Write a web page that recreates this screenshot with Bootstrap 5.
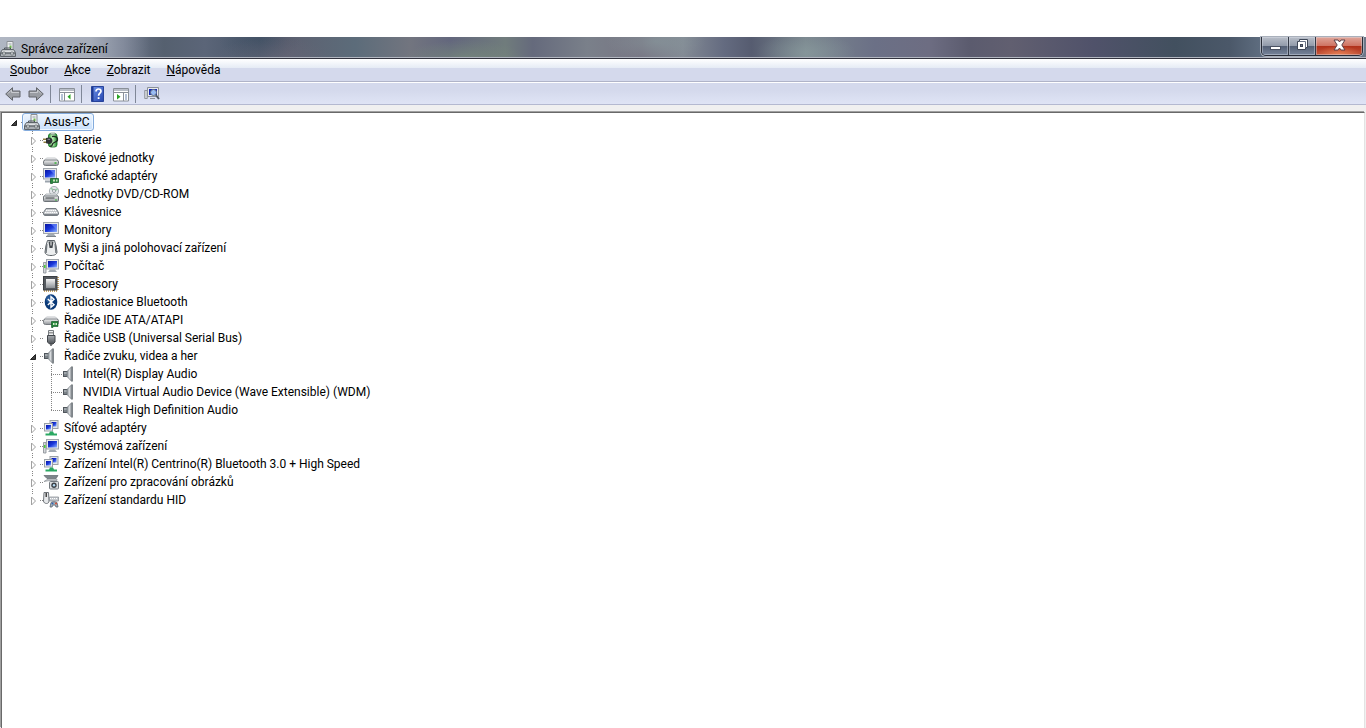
<!DOCTYPE html>
<html lang="cs">
<head>
<meta charset="utf-8">
<meta name="viewport" content="width=device-width, initial-scale=1">
<title>Správce zařízení</title>
<link href="https://cdn.jsdelivr.net/npm/bootstrap@5.3.0/dist/css/bootstrap.min.css" rel="stylesheet">
<style>
  body { font: 12px/18px Roboto, "Open Sans", sans-serif; color: #000; background: #fff; padding-top: 37px; }
  button { font: inherit; color: inherit; background: none; border: 0; padding: 0; }
  svg { display: block; flex: none; }
  .icon16 { width: 16px; height: 16px; }

  .titlebar {
    height: 22px; border-bottom: 1px solid #33343f; box-shadow: inset 0 -1px #b3b7c1;
    background:
      linear-gradient(90deg, rgba(214,219,227,.65), rgba(205,210,218,.6) 90px, rgba(190,196,206,.3) 122px, transparent 150px),
      radial-gradient(60px 20px at 20% 100%, rgba(104,104,120,.5), transparent),
      radial-gradient(60px 18px at 34% 100%, rgba(122,144,122,.6), transparent),
      radial-gradient(50px 20px at 59% 75%, rgba(145,165,165,.5), transparent),
      radial-gradient(50px 20px at 48% 20%, rgba(140,160,162,.5), transparent),
      radial-gradient(40px 20px at 19% 20%, rgba(62,78,98,.5), transparent),
      linear-gradient(90deg, #687286 0, #6b7488 9%, #55606f 12%, #5b6578 15%, #485669 19%, #5d6070 21%, #5c6c7a 26%, #72757f 30%, #63677d 33%, #707c7c 37%, #656a7c 39%, #7a808a 43%, #777583 47%, #838a94 50%, #646b80 53%, #565c70 55%, #7a868e 59%, #6b7086 64%, #6d6d82 68%, #5b5b6e 71%, #615f70 74%, #50526a 80%, #42505f 86%, #4b5869 90%, #647386 93%, #6d7889 100%);
  }
  .caption { gap: 5px; }
  .caption h1 { font-size: 12px; line-height: 16px; }
  .caption-group { height: 19px; margin-right: 3px; border: 1px solid #282c37; border-top: 0; border-radius: 0 0 5px 5px; box-shadow: 0 0 0 1px #a9b0bb; overflow: hidden; }
  .caption-btn { width: 27px; background: linear-gradient(#b9bfc9, #929baa 48%, #535f74 50%, #77849a); border-right: 1px solid #333945; box-shadow: inset 0 0 0 1px rgba(220,226,235,.4); }
  .caption-close { width: 46px; border-right: 0; background: radial-gradient(24px 9px at 50% 100%, #e88055, transparent), linear-gradient(#e0a69a, #cf7464 48%, #b0301a 50%, #c05238); }

  .menubar { height: 23px; padding-left: 2px; border-bottom: 1px solid #b0b4c8; background: linear-gradient(#fff, #e5ebf5 9px, #d4d9ec 9px); }
  .menubar button { padding: 0 8px; line-height: 22px; }
  .toolstrip { height: 23px; padding-left: 1px; border-top: 1px solid #fff; border-bottom: 1px solid #b4b9d0; background: linear-gradient(#d4d9ec 35%, #dfe4f5); }
  .toolstrip button { margin: 0 3px 0 4px; }
  .toolstrip .vr { width: 1px; height: 18px; margin: 0 4px 0 3px; align-self: center; background: #7f8797; opacity: 1; }
  .mirrored { transform: scaleX(-1); }

  .workarea { background: #f0f0f0; padding-top: 6px; }
  .treepane { margin: 1px 1px 0 1px; border: 1px solid #696969; border-right-color: #e3e3e3; border-bottom: 0; background: #fff; box-shadow: -1px -1px #a0a0a0; }
  .treepane ul { list-style: none; margin: 0; padding: 0; }
  .treepane .devices, .treepane .children { background: linear-gradient(#858585 50%, transparent 50%) repeat-y; background-size: 1px 2px; }
  .treepane .devices { background-position: 30px 0; }
  .treepane .children { background-position: 49px 0; }
  .treepane .node { height: 18px; }
  .devices > li:last-child, .children > li:last-child { background: linear-gradient(transparent 9px, #fff 9px) 49px 0 no-repeat; }
  .devices > li:last-child { background-position: 0 0; }
  .root > li > .node { padding-left: 5px; }
  .devices > li > .node { padding-left: 24px; }
  .children > li > .node { padding-left: 49px; }
  .twist { width: 14px; height: 12px; margin-top: 2px; background: #fff; }
  .dots { width: 3px; height: 1px; background: linear-gradient(90deg, #858585 50%, transparent 50%) 0 0 / 2px 1px; }
  .dots-root { width: 1px; }
  .children .dots { width: 11px; }
  .nodetext { margin-left: 5px; color: #000; text-decoration: none; white-space: nowrap; }
  .picked { height: 18px; padding: 0 3px 0 1px; border: 1px solid #84acdd; border-radius: 3px; background: linear-gradient(#eff6fe, #c9e0fb); box-shadow: inset 0 0 0 1px #eff7ff; line-height: 16px; color: #000; text-decoration: none; }
</style>
</head>
<body class="d-flex flex-column min-vh-100">

<svg width="0" height="0" class="position-absolute" aria-hidden="true">
  <defs>
    <linearGradient id="gGrey" x1="0" y1="0" x2="0" y2="1"><stop offset="0" stop-color="#f4f4f4"/><stop offset="1" stop-color="#8e9297"/></linearGradient>
    <linearGradient id="gDark" x1="0" y1="0" x2="0" y2="1"><stop offset="0" stop-color="#a8acb0"/><stop offset="1" stop-color="#4a4f54"/></linearGradient>
    <linearGradient id="gBlue" x1="0" y1="0" x2="1" y2="1"><stop offset="0" stop-color="#0814a0"/><stop offset=".5" stop-color="#1a38dc"/><stop offset="1" stop-color="#8fb4ff"/></linearGradient>
    <linearGradient id="gCone" x1="0" y1="0" x2="1" y2="0"><stop offset="0" stop-color="#8d949a"/><stop offset=".45" stop-color="#d9dcdf"/><stop offset="1" stop-color="#5c6369"/></linearGradient>
    <linearGradient id="gGreen" x1="0" y1="0" x2="1" y2="0"><stop offset="0" stop-color="#25962f"/><stop offset=".45" stop-color="#c4f5ba"/><stop offset="1" stop-color="#1f8a2e"/></linearGradient>
    <linearGradient id="gHelp" x1="0" y1="0" x2="1" y2="1"><stop offset="0" stop-color="#6f94ea"/><stop offset="1" stop-color="#2444ae"/></linearGradient>
  </defs>
  <symbol id="i-pc" viewBox="0 0 16 16"><path d="M7 .5h6v8H7z" fill="#eef0f1" stroke="#8a8f94"/><path d="M8.500 2h3v2h-3z" fill="#c3c8cc"/><path d="M9.500 4.500h2v3h-2z" fill="#6cbb4c"/><path d="M4.500 9V7h6v2" fill="none" stroke="#4d5358"/><path d="M2.500 8.500h11l2 3V15.500H.5v-4z" fill="#a9aeb3" stroke="#5e646a"/><path d="M2.500 9.500h11l1 2h-13z" fill="#dfe2e4"/><path d="M1 12h14" stroke="#454b50"/><path d="M3 11h2v3H3zM11 11h2v3h-2z" fill="#e6e8ea" stroke="#555b60" stroke-width=".6"/></symbol>
  <symbol id="i-battery" viewBox="0 0 16 16"><rect x="5.500" y="1.500" width="8.500" height="13.500" rx="2.500" fill="url(#gGreen)" stroke="#1c7529" stroke-width=".9"/><path d="M7.500 1h4.500v1.500H7.500z" fill="#dfe8df" stroke="#6b8870" stroke-width=".6"/><path d="M9 4.500c4-.5 6 1 5.500 3.500S10 10 9.500 12s-1 2.500-2.500 2" fill="none" stroke="#1d2a20" stroke-width="1.300"/><path d="M3 6l3-.5c2.500 0 3.500 1.500 3.500 3.300S8 12 6 12l-3-.8z" fill="#2e3134"/><path d="M4.500 7.300h2.500" stroke="#90959a"/><path d="M0 7.200h3M.5 10.200H3" stroke="#8d7c3d" stroke-width="1.400"/></symbol>
  <symbol id="i-disk" viewBox="0 0 16 16"><path d="M3.500 8h9l2.500 2.500H1z" fill="#f5f6f7" stroke="#b6babe" stroke-width=".8"/><rect x=".5" y="10" width="15" height="5.500" rx="2" fill="url(#gGrey)" stroke="#73787d"/><path d="M11.500 13h2" stroke="#38b637" stroke-width="1.500"/></symbol>
  <symbol id="i-mon" viewBox="0 0 16 16"><rect x=".5" y=".5" width="15" height="11" fill="#e6e8eb" stroke="#a1a6ad"/><path d="M2 2h12v8H2z" fill="url(#gBlue)"/><path d="M8 2h6v6z" fill="#7898ff" opacity=".6"/><path d="M5 12h6l1.500 2h-9z" fill="#a3abb3"/><path d="M3 14.500h10" stroke="#7d858d"/></symbol>
  <symbol id="i-gfx" viewBox="0 0 16 16"><rect x=".5" y=".5" width="13" height="10.500" fill="#e6e8eb" stroke="#a1a6ad"/><path d="M2 2h10v7.500H2z" fill="url(#gBlue)"/><path d="M7 2h5v5z" fill="#7898ff" opacity=".6"/><path d="M2 12.500h6v2H2z" fill="#9aa3ac"/><path d="M7.500 10.500h8V14.500h-6v1H7.500z" fill="#2b8b3f" stroke="#0e5423" stroke-width=".7"/><path d="M10 11.500h2v2h-2zM13 11.500h1.500v2H13z" fill="#c8e0bd"/></symbol>
  <symbol id="i-dvd" viewBox="0 0 16 16"><circle cx="11" cy="5" r="4.600" fill="#e3e6ea" stroke="#979ea5" stroke-width=".8"/><path d="M11 5L8 2M11 5l3.500-2" stroke="#93cfa2" stroke-width="1.500"/><circle cx="11" cy="5" r="1.500" fill="#fff" stroke="#747b82" stroke-width=".7"/><path d="M3 8h10l2.500 2.500H.5z" fill="#e9ebed" stroke="#969ca1" stroke-width=".7"/><rect x=".5" y="10" width="15" height="5.500" rx="1" fill="url(#gGrey)" stroke="#6d7378"/><path d="M2.500 12h9" stroke="#3f4549"/><path d="M12 14h2" stroke="#3cbb3c"/></symbol>
  <symbol id="i-key" viewBox="0 0 16 16"><path d="M3 4.500h10l2.500 4v1.500c0 1-1 1.500-1.500 1.500H2c-.7 0-1.500-.5-1.500-1.500V8.500z" fill="#c4c7cb" stroke="#777d83"/><path d="M3 6.500h10M2 8.500h12" stroke="#fff" stroke-dasharray="1.500 .7"/><path d="M1 10.500h14" stroke="#7d8389"/></symbol>
  <symbol id="i-mouse" viewBox="0 0 16 16"><path d="M4.500.5h7l1.500 5 1 6.500c0 2-2 3.500-6 3.500S2 14 2 12l1-6.500z" fill="#eceeef" stroke="#5b6166"/><path d="M5.500 1.500L6.500 8h3l1-6.500z" fill="#43484d"/><path d="M7.500 2h1v3.500h-1z" fill="#fff"/><path d="M3.800 4L3 13M12.200 4l.8 9" stroke="#72787d" stroke-width="1.500"/></symbol>
  <symbol id="i-comp" viewBox="0 0 16 16"><path d="M.5 4.500h2.500V15H.5z" fill="#d5d8db" stroke="#868c92" stroke-width=".8"/><path d="M1 7h1.500v3H1z" fill="#49cf37"/><rect x="3.500" y="1.500" width="12" height="9.500" fill="#e6e8eb" stroke="#9fa5ab"/><path d="M5 3h9v6.500H5z" fill="url(#gBlue)"/><path d="M7 11.500h5l2 2.500H5z" fill="#a3abb3"/></symbol>
  <symbol id="i-cpu" viewBox="0 0 16 16"><path d="M15 1v14M1 15h14" stroke="#b88a38" stroke-width="1.500" stroke-dasharray="1 1"/><rect x=".5" y=".5" width="13.500" height="13.500" fill="#55595e" stroke="#3c3f43"/><rect x="3" y="3" width="9" height="9" fill="url(#gGrey)"/></symbol>
  <symbol id="i-bt" viewBox="0 0 16 16"><ellipse cx="8" cy="8" rx="6.300" ry="7.800" fill="#0b3a78"/><ellipse cx="7" cy="5" rx="4" ry="4" fill="#3e73b4" opacity=".5"/><path d="M4.800 5l6.200 5.700L8 13.300V2.700l3 2.600L4.800 11" fill="none" stroke="#fff" stroke-width="1.400"/></symbol>
  <symbol id="i-ide" viewBox="0 0 16 16"><path d="M3.500 5h9l2.500 2.500H1z" fill="#f5f6f7" stroke="#aeb3b7" stroke-width=".8"/><rect x=".5" y="7" width="15" height="5.500" rx="2" fill="url(#gGrey)" stroke="#777c81"/><path d="M8.500 9.500h6.500v5H10v1H8.500z" fill="#24863a" stroke="#0d4f20" stroke-width=".6"/><path d="M10 11h1.500v2H10zM12.500 11H14v2h-1.500z" fill="#d8ecd0"/></symbol>
  <symbol id="i-usb" viewBox="0 0 16 16"><path d="M5.500.5h5v5h-5z" fill="#eceeef" stroke="#777c80"/><path d="M6.500 2h1v1.500h-1zM8.500 2h1v1.500h-1z" fill="#444"/><path d="M4.500 5.500h7.500V12l-2 2H6.500l-2-2z" fill="url(#gDark)" stroke="#43474b"/><path d="M8 14v2" stroke="#54585c" stroke-width="1.500"/></symbol>
  <symbol id="i-snd" viewBox="0 0 16 16"><rect x="1.500" y="5.500" width="4" height="5" fill="#7b8288" stroke="#50565c"/><path d="M2 7h3" stroke="#c9ced2"/><path d="M5 5.500L9.500 .8c.5-.4 1-.2 1 .4v13.600c0 .6-.5.800-1 .4L5 10.500z" fill="url(#gCone)" stroke="#6c7379" stroke-width=".7"/></symbol>
  <symbol id="i-net" viewBox="0 0 16 16"><rect x="7" y=".5" width="8" height="8" fill="#e4e7ea" stroke="#9aa0a7"/><path d="M8.500 2h5v4.500h-5z" fill="url(#gBlue)"/><rect x="1.500" y="3.500" width="8" height="7.500" fill="#eceef1" stroke="#9aa0a7"/><path d="M3 5h5v4.500H3z" fill="url(#gBlue)"/><path d="M7 11.500h3l1 2h3V15.500H2.500v-2H6z" fill="#2aa862"/></symbol>
  <symbol id="i-img" viewBox="0 0 16 16"><path d="M1 1.500h14l-2 3H4z" fill="#7d858b" stroke="#5f666c" stroke-width=".7"/><path d="M1 7.500l4-2.500h9V6.500H7z" fill="#cfd3d6" stroke="#7f858b" stroke-width=".6"/><rect x="6.500" y="7.500" width="9" height="7.500" rx="1" fill="#dadddf" stroke="#747a80"/><circle cx="11" cy="11.300" r="2.700" fill="#3c4147"/><circle cx="11" cy="11.300" r="1.200" fill="#b5dcf5"/></symbol>
  <symbol id="i-hid" viewBox="0 0 16 16"><path d="M1 .5h4.500L6 9c0 1.500-1 2.500-2.500 2.500S.5 10.500.5 9z" fill="#e6e8ea" stroke="#62686d" stroke-width=".9"/><path d="M2.500 1h1.500V5H2.500z" fill="#444"/><path d="M6.500 5h9v4h-9z" fill="#c6cacf" stroke="#82888e" stroke-width=".7"/><path d="M7 6.500h8" stroke="#fff" stroke-dasharray="1 1"/><path d="M7 15l1-4.500c1-1 5-1 6 0l1 4.500h-2l-1-2H10l-1 2z" fill="#a5b0ba" stroke="#596570" stroke-width=".8"/><circle cx="9.500" cy="11.500" r="1" fill="#2e63b8"/><circle cx="13" cy="11.500" r="1" fill="#d84b32"/></symbol>
  <symbol id="i-left" viewBox="0 0 16 16"><path d="M.7 8L7.500 1.700V5H15v6H7.500v3.300z" fill="#9a9da3" stroke="#62656b"/><path d="M3 7.500L6.500 4v2.500H14" fill="none" stroke="#c8cacf"/></symbol>
  <symbol id="i-pane" viewBox="0 0 16 16"><path d="M.5 2.500h15v12.500H.5z" fill="#fff" stroke="#8a9099"/><path d="M1 3h14v2H1z" fill="#b9bec8"/><path d="M1 6.500h14M5.500 7v8" stroke="#8a9099"/><path d="M2 9h2M2 11h2M2 13h2" stroke="#6a83ad"/><path d="M11.500 8v5.500L8.500 10.800z" fill="#28a322"/></symbol>
  <symbol id="i-pane2" viewBox="0 0 16 16"><path d="M.5 2.500h15v12.500H.5z" fill="#fff" stroke="#8a9099"/><path d="M1 3h14v2H1z" fill="#b9bec8"/><path d="M1 6.500h14M10.500 7v8" stroke="#8a9099"/><path d="M12 9h2M12 11h2M12 13h2" stroke="#6a83ad"/><path d="M4 8v5.500l3.500-2.700z" fill="#28a322"/></symbol>
  <symbol id="i-help" viewBox="0 0 16 16"><path d="M1.500.5h12v15h-12z" fill="url(#gHelp)" stroke="#27439a"/><path d="M2 1h1.500v14H2z" fill="#1f3a92"/><path d="M6 5.500c0-3.300 5-3.300 5-.3 0 2-2.400 2-2.400 4.500" fill="none" stroke="#fff" stroke-width="1.700"/><path d="M7.700 11.200h1.800V13H7.700z" fill="#fff"/></symbol>
  <symbol id="i-scan" viewBox="0 0 16 16"><path d="M.7 4.500h2.600V12.500H.7z" fill="#d5d8db" stroke="#81878d" stroke-width=".8"/><path d="M3.500 1.500h11v9h-11z" fill="#e9ebee" stroke="#8b9198"/><path d="M5 3h8v6H5z" fill="#1226b8"/><path d="M6 12h5v1H6z" fill="#8b9198"/><circle cx="9.500" cy="6.500" r="3" fill="#a9cdfb" fill-opacity=".9" stroke="#5f6d80"/><path d="M11.800 9l3.200 4" stroke="#4f5964" stroke-width="2"/></symbol>
  <symbol id="t-shut" viewBox="0 0 14 12"><path d="M5.500 2v8l4-4z" fill="#fff" stroke="#a0a0a0"/></symbol>
  <symbol id="t-open" viewBox="0 0 14 12"><path d="M9.500 3.500v5h-5z" fill="#404040" stroke="#222"/></symbol>
</svg>

<header class="titlebar d-flex justify-content-between align-items-start">
  <div class="caption d-flex align-items-center pt-1">
    <svg class="icon16"><use href="#i-pc"/></svg>
    <h1 class="m-0 fw-normal">Správce zařízení</h1>
  </div>
  <div class="caption-group d-flex">
    <button class="caption-btn d-flex align-items-center justify-content-center" aria-label="Minimalizovat"><svg width="13" height="14"><rect x="1.500" y="7.500" width="10" height="3" fill="#fff" stroke="#4a5262"/></svg></button>
    <button class="caption-btn d-flex align-items-center justify-content-center" aria-label="Obnovit"><svg width="13" height="16"><path d="M3.500 1.500h8v8h-2v2h-8v-8h2z" fill="#fff" stroke="#3f4757"/><path d="M3.500 3.500h6v6" fill="none" stroke="#6a7385"/><rect x="4.500" y="6.500" width="2" height="2" fill="#6a7385" stroke="#3f4757"/></svg></button>
    <button class="caption-btn caption-close d-flex align-items-center justify-content-center" aria-label="Zavřít"><svg width="13" height="14"><path d="M1 1h4l1.500 2L8 1h4L8.800 6l3.200 5H8L6.500 9 5 11H1l3.200-5z" fill="#fff" stroke="#5b4048"/></svg></button>
  </div>
</header>

<nav class="menubar d-flex flex-shrink-0" aria-label="Nabídka">
  <button><u>S</u>oubor</button>
  <button><u>A</u>kce</button>
  <button><u>Z</u>obrazit</button>
  <button><u>N</u>ápověda</button>
</nav>

<div class="toolstrip d-flex align-items-center flex-shrink-0" role="toolbar">
  <button aria-label="Zpět"><svg class="icon16"><use href="#i-left"/></svg></button>
  <button aria-label="Vpřed"><svg class="icon16 mirrored"><use href="#i-left"/></svg></button>
  <span class="vr"></span>
  <button aria-label="Strom konzoly"><svg class="icon16"><use href="#i-pane"/></svg></button>
  <span class="vr"></span>
  <button aria-label="Nápověda"><svg class="icon16"><use href="#i-help"/></svg></button>
  <button aria-label="Podokno akcí"><svg class="icon16"><use href="#i-pane2"/></svg></button>
  <span class="vr"></span>
  <button aria-label="Vyhledat změny hardwaru"><svg class="icon16"><use href="#i-scan"/></svg></button>
</div>

<main class="workarea flex-grow-1 d-flex flex-column">
  <div class="treepane flex-grow-1">
    <ul class="root">
      <li>
        <div class="node d-flex align-items-center"><button class="twist" aria-label="Sbalit"><svg width="14" height="12"><use href="#t-open"/></svg></button><span class="dots dots-root"></span><a href="#" class="picked d-flex align-items-center"><svg class="icon16"><use href="#i-pc"/></svg><span class="ps-1">Asus-PC</span></a></div>
        <ul class="devices" id="devices"></ul>
      </li>
    </ul>
  </div>
</main>

<script src="https://cdn.jsdelivr.net/npm/bootstrap@5.3.0/dist/js/bootstrap.bundle.min.js"></script>
<script>
  const devices = [
    ["battery", "Baterie"], ["disk", "Diskové jednotky"], ["gfx", "Grafické adaptéry"],
    ["dvd", "Jednotky DVD/CD-ROM"], ["key", "Klávesnice"], ["mon", "Monitory"],
    ["mouse", "Myši a jiná polohovací zařízení"], ["comp", "Počítač"], ["cpu", "Procesory"],
    ["bt", "Radiostanice Bluetooth"], ["ide", "Řadiče IDE ATA/ATAPI"], ["usb", "Řadiče USB (Universal Serial Bus)"],
    ["snd", "Řadiče zvuku, videa a her", ["Intel(R) Display Audio", "NVIDIA Virtual Audio Device (Wave Extensible) (WDM)", "Realtek High Definition Audio"]],
    ["net", "Síťové adaptéry"], ["comp", "Systémová zařízení"], ["net", "Zařízení Intel(R) Centrino(R) Bluetooth 3.0 + High Speed"],
    ["img", "Zařízení pro zpracování obrázků"], ["hid", "Zařízení standardu HID"]
  ];
  const label = (icon, text) => `<span class="dots"></span><svg class="icon16"><use href="#i-${icon}"/></svg><a href="#" class="nodetext">${text}</a>`;
  document.getElementById("devices").innerHTML = devices.map(([icon, text, kids]) =>
    `<li><div class="node d-flex align-items-center"><button class="twist" aria-label="${kids ? "Sbalit" : "Rozbalit"}"><svg width="14" height="12"><use href="#t-${kids ? "open" : "shut"}"/></svg></button>${label(icon, text)}</div>` +
    (kids ? `<ul class="children">${kids.map(k => `<li><div class="node d-flex align-items-center">${label("snd", k)}</div></li>`).join("")}</ul>` : "") + `</li>`).join("");
</script>
</body>
</html>
